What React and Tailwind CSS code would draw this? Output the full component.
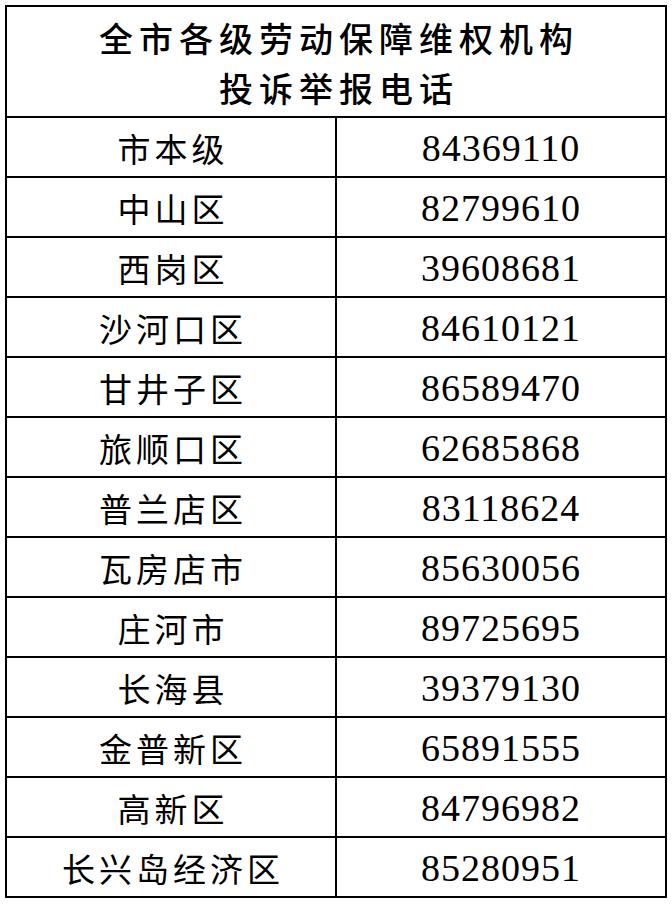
import React from "react";

const rows = [
  ["市本级", "84369110"],
  ["中山区", "82799610"],
  ["西岗区", "39608681"],
  ["沙河口区", "84610121"],
  ["甘井子区", "86589470"],
  ["旅顺口区", "62685868"],
  ["普兰店区", "83118624"],
  ["瓦房店市", "85630056"],
  ["庄河市", "89725695"],
  ["长海县", "39379130"],
  ["金普新区", "65891555"],
  ["高新区", "84796982"],
  ["长兴岛经济区", "85280951"],
];

const cjk = { fontFamily: '"Noto Sans CJK SC", sans-serif' };
const num = { fontFamily: '"Liberation Serif", serif' };

export default function App() {
  return (
    <div className="min-h-[904px] w-[672px] bg-white p-[5px] text-black">
      <div className="w-[662px] border-2 border-black">
        {/* title */}
        <div
          className="flex h-[109px] flex-col items-center justify-center pl-[6px] pt-[2px] text-[34px] leading-[50px] font-medium tracking-[6px]"
          style={cjk}
        >
          <div>全市各级劳动保障维权机构</div>
          <div>投诉举报电话</div>
        </div>

        {rows.map(([name, phone]) => (
          <div key={name} className="flex h-[60px] border-t-2 border-black">
            <div
              className="flex w-[330px] items-center justify-center border-r-2 border-black pl-[4px] pt-[3px] text-[33px] tracking-[4px]"
              style={cjk}
            >
              {name}
            </div>
            <div
              className="flex flex-1 items-center justify-center pt-[3px] text-[38px] tracking-[1px]"
              style={num}
            >
              {phone}
            </div>
          </div>
        ))}
      </div>
    </div>
  );
}
